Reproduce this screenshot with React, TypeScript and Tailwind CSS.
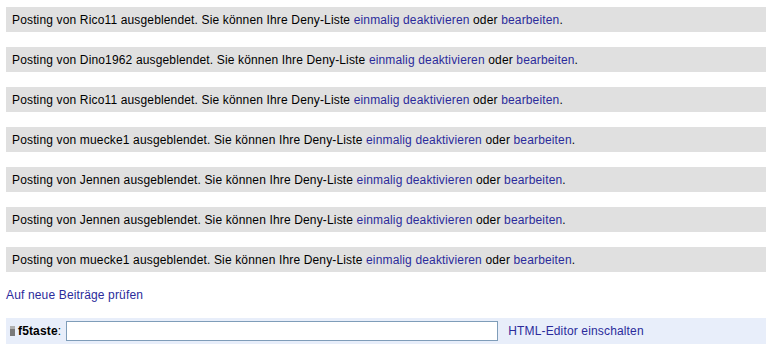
import React from 'react';

const posts = ['Rico11', 'Dino1962', 'Rico11', 'muecke1', 'Jennen', 'Jennen', 'muecke1'];

const Notice: React.FC<{ user: string }> = ({ user }) => (
  <div className="h-[25px] bg-[#e0e0e0] pl-[6px] flex items-center text-[12px] text-black">
    <span>
      Posting von {user} ausgeblendet. Sie können Ihre Deny-Liste{' '}
      <a href="#" className="text-[#2b2b9b]">einmalig deaktivieren</a> oder{' '}
      <a href="#" className="text-[#2b2b9b]">bearbeiten</a>.
    </span>
  </div>
);

export default function App() {
  return (
    <div className="w-[773px] h-[350px] bg-white pl-[6px] pr-[7px] pt-[7px] tracking-[0.15px] font-['Liberation_Sans',Arial,sans-serif]">
      <div className="flex flex-col gap-[15px]">
        {posts.map((u, i) => (
          <Notice key={i} user={u} />
        ))}
      </div>
      <div className="mt-[15px] h-[16px] flex items-center text-[12px]">
        <a href="#" className="text-[#2b2b9b]">Auf neue Beiträge prüfen</a>
      </div>
      <div className="mt-[15px] h-[26px] bg-[#e8eefa] flex items-center pl-[4px] text-[12px]">
        <span className="inline-block w-[5px] h-[10px] bg-[#7a7a7a] border-t-[3px] border-[#b0b0b0] mr-[3px]" />
        <b className="text-black">f5taste</b>
        <span className="text-black">:</span>
        <input className="ml-[5px] w-[432px] h-[20px] border border-[#7f9db9] bg-white outline-none" />
        <a href="#" className="ml-[10px] text-[#2b2b9b]">HTML-Editor einschalten</a>
      </div>
    </div>
  );
}
